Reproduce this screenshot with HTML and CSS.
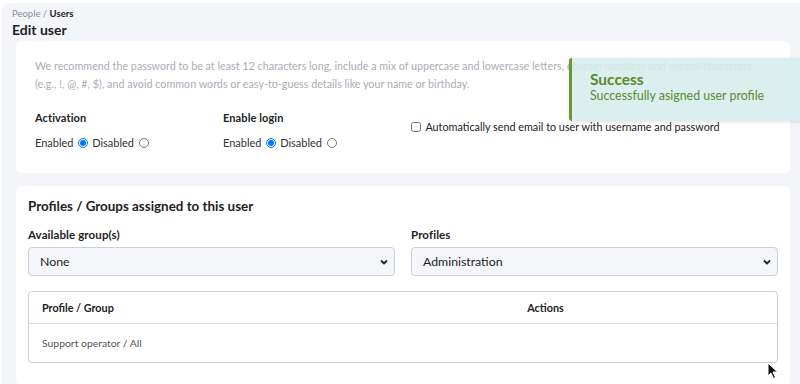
FILE: index.html
```html
<!DOCTYPE html>
<html>
<head>
<meta charset="utf-8">
<title>Edit user</title>
<link rel="stylesheet" href="styles.css">
</head>
<body>
<div class="main">
  <div class="crumbs">People / <b>Users</b></div>
  <h1>Edit user</h1>

  <section class="card card-user">
    <p class="hint">We recommend the password to be at least 12 characters long, include a mix of uppercase and lowercase letters, contain numbers and special characters (e.g., !, @, #, $), and avoid common words or easy-to-guess details like your name or birthday.</p>
    <div class="opts">
      <div class="opt">
        <div class="lbl">Activation</div>
        <div class="radios">Enabled <input type="radio" name="act" checked> Disabled <input type="radio" name="act"></div>
      </div>
      <div class="opt">
        <div class="lbl">Enable login</div>
        <div class="radios">Enabled <input type="radio" name="login" checked> Disabled <input type="radio" name="login"></div>
      </div>
      <label class="mail"><input type="checkbox"> Automatically send email to user with username and password</label>
    </div>
  </section>

  <section class="card card-groups">
    <h2>Profiles / Groups assigned to this user</h2>
    <div class="pickers">
      <div class="picker">
        <div class="lbl">Available group(s)</div>
        <div class="select">
          <span>None</span>
          <svg width="10" height="10" viewBox="0 0 10 10"><path d="M2 3.5 L5 6.5 L8 3.5" fill="none" stroke="#222" stroke-width="1.8"/></svg>
        </div>
      </div>
      <div class="picker">
        <div class="lbl">Profiles</div>
        <div class="select">
          <span>Administration</span>
          <svg width="10" height="10" viewBox="0 0 10 10"><path d="M2 3.5 L5 6.5 L8 3.5" fill="none" stroke="#222" stroke-width="1.8"/></svg>
        </div>
      </div>
    </div>
    <div class="table">
      <div class="row head"><div class="c1">Profile / Group</div><div class="c2">Actions</div></div>
      <div class="row"><div class="c1">Support operator / All</div><div class="c2"></div></div>
    </div>
  </section>

  <div class="toast">
    <div class="t-title">Success</div>
    <div class="t-msg">Successfully asigned user profile</div>
  </div>

  <svg class="cursor" width="12" height="18" viewBox="0 0 12 18"><path d="M1 1 L1 14 L4 11 L6.5 16.5 L8.5 15.5 L6 10 L10.5 10 Z" fill="#111" stroke="#fff" stroke-width="1"/></svg>
</div>
</body>
</html>
```

FILE: styles.css
```css
body { margin: 0; background: #fff; font-family: Lato, "Open Sans", sans-serif; color: #222; }

.main {
  position: relative;
  margin: 3px 0 0 2px;
  height: 381px;
  overflow: hidden;
  background: #f4f5f9;
  border-top-left-radius: 8px;
  padding: 5px 10px 0 14px;
  box-sizing: border-box;
}

.crumbs { font-size: 9.5px; color: #8a8f99; margin-left: -4px; line-height: 12px; }
.crumbs b { color: #222; font-weight: 700; }
h1 { font-size: 14px; font-weight: 700; margin: 1px 0 0 -4px; line-height: 18px; }

.card { background: #fff; border-radius: 6px; }
.card-user { margin-top: 2px; padding: 16px 18px 0 19px; height: 132px; box-sizing: border-box; }

.hint { margin: 0; font-size: 10.75px; line-height: 18px; color: #a9adb5; }

.opts { display: flex; margin-top: 18px; }
.opt { width: 188px; }
.lbl { font-size: 11px; font-weight: 700; line-height: 14px; letter-spacing: 0.1px; }
.radios { font-size: 11px; margin-top: 11px; color: #333; }
.radios input { width: 10px; height: 10px; margin: 0 1px 0 2px; vertical-align: -1px; }
.mail { font-size: 10.8px; margin-top: 9px; color: #222; }
.mail input { width: 10px; height: 10px; margin: 0 2px 0 0; vertical-align: -1px; }

.card-groups { margin-top: 13px; padding: 10px 12px 22px 12px; height: 200px; box-sizing: border-box; }
h2 { font-size: 13.4px; font-weight: 700; margin: 0; line-height: 20px; }

.pickers { display: flex; gap: 16px; margin-top: 12px; }
.picker { flex: 1; }
.picker .lbl { font-size: 11.5px; }
.select {
  display: flex; align-items: center; justify-content: space-between;
  margin-top: 5px; height: 29px; box-sizing: border-box;
  padding: 0 5px 0 11px;
  background: #f4f6fa; border: 1px solid #c9d0db; border-radius: 4px;
  font-size: 12.3px; color: #222;
}

.table { margin-top: 15px; border: 1px solid #c9d0db; border-radius: 4px; }
.row { display: flex; align-items: center; }
.row.head { height: 31px; font-weight: 700; font-size: 10.8px; border-bottom: 1px solid #d5dbe4; }
.row:not(.head) { color: #555; height: 38px; font-size: 10.4px; }
.c1 { flex: 0 0 285px; padding-left: 13px; box-sizing: border-box; }
.c2 { flex: 1; text-align: center; }

/* toast is slightly see-through, the hint shows under it */
.toast {
  position: absolute; left: 567px; top: 55px; width: 240px; height: 63px;
  box-sizing: border-box; padding: 12px 18px;
  background: rgba(214, 237, 236, 0.9); border-left: 3px solid #6b9538; border-radius: 3px;
  box-shadow: 0 1px 4px rgba(0,0,0,0.12);
  color: #5b8a2c;
}
.t-title { font-size: 15.5px; font-weight: 700; line-height: 18px; }
.t-msg { font-size: 12.4px; line-height: 16px; }

.cursor { position: absolute; left: 765px; top: 359px; }
```
